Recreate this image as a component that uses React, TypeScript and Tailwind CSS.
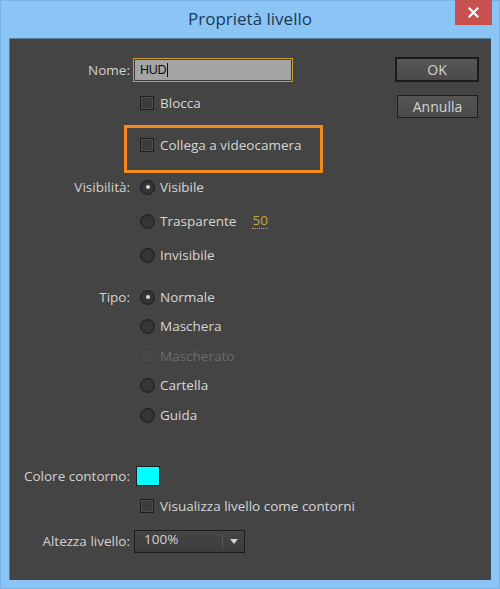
import React from 'react';

const font = "font-['Open_Sans','Noto_Sans',sans-serif]";

const Checkbox = () => (
  <span className="w-[14px] h-[14px] shrink-0 border border-[#1f1f1f] bg-[#3b3b3b] shadow-[inset_0_0_0_1px_#4d4d4d]" />
);

const Radio = ({ checked, disabled }: { checked?: boolean; disabled?: boolean }) => (
  <span
    className={`w-[15px] h-[15px] shrink-0 rounded-full flex items-center justify-center border ${
      disabled ? 'border-[#3c3c3c] bg-[#474747]' : 'border-[#202020] bg-[#363636] shadow-[inset_0_0_0_1px_#2c2c2c]'
    }`}
  >
    {checked && <span className="w-[4px] h-[4px] rounded-full bg-[#dadada]" />}
  </span>
);

const Row = ({ label, className, children }: { label?: string; className: string; children: React.ReactNode }) => (
  <div className={`flex items-center ${className}`}>
    <div className="w-[120px] shrink-0 text-right text-[#d2d2d2]">{label}</div>
    <div className="ml-[10px] flex items-center">{children}</div>
  </div>
);

const Option = ({ label, checked, disabled }: { label: string; checked?: boolean; disabled?: boolean }) => (
  <span className="flex items-center gap-[5px]">
    <Radio checked={checked} disabled={disabled} />
    <span className={disabled ? 'text-[#6b6b6b]' : 'text-[#d6d6d6]'}>{label}</span>
  </span>
);

export default function App() {
  return (
    <div className={`w-[500px] h-[589px] bg-[#8ac5f5] border border-[#7ab4e6] flex flex-col ${font}`}>
      {/* Title bar */}
      <div className="relative h-[37px] shrink-0 flex items-center justify-center">
        <span className="text-[17px] text-[#1d3a58] -mt-[2px]">Proprietà livello</span>
        <div className="absolute top-[-1px] right-[7px] w-[37px] h-[25px] bg-[#c8504f] flex items-center justify-center">
          <svg width="11" height="11" viewBox="0 0 11 11">
            <path d="M1.5 1.5 L9.5 9.5 M9.5 1.5 L1.5 9.5" stroke="#fff" strokeWidth="2.2" strokeLinecap="square" />
          </svg>
        </div>
      </div>

      {/* Panel */}
      <div className="mx-[8px] mb-[8px] flex-1 bg-[#444444] border-t border-l border-[#5b7d9c] flex text-[13.5px]">
        <div className="flex-1 pt-[19px]">
          <Row label="Nome:" className="h-[24px]">
            <div className="-ml-[7px] w-[160px] h-[24px] border border-[#c9a12a] bg-[#a4a4a4] shadow-[inset_0_0_0_1px_#3c3c3c] flex items-center pl-[6px] text-[#111]">
              <span className="font-['Liberation_Sans',sans-serif] text-[12.5px] tracking-[-0.3px]">HUD</span>
              <span className="w-px h-[14px] bg-[#111] ml-[1px]" />
            </div>
          </Row>

          <Row className="mt-[10px] h-[22px]">
            <span className="flex items-center gap-[6px]">
              <Checkbox />
              <span className="text-[#d6d6d6]">Blocca</span>
            </span>
          </Row>

          <Row className="mt-[11px] h-[47px]">
            <div className="-ml-[16px] w-[199px] h-[48px] border-[3px] border-[#f5891c] flex items-center pl-[13px] pb-[7px]">
              <span className="flex items-center gap-[6px]">
                <Checkbox />
                <span className="text-[#d6d6d6]">Collega a videocamera</span>
              </span>
            </div>
          </Row>

          <Row label="Visibilità:" className="mt-[4px] h-[22px]">
            <Option label="Visibile" checked />
          </Row>
          <Row className="mt-[12px] h-[22px]">
            <Option label="Trasparente" />
            <span className="ml-[16px] text-[#caa43c] border-b border-dotted border-[#caa43c] leading-[15px]">50</span>
          </Row>
          <Row className="mt-[12px] h-[22px]">
            <Option label="Invisibile" />
          </Row>

          <Row label="Tipo:" className="mt-[20px] h-[22px]">
            <Option label="Normale" checked />
          </Row>
          <Row className="mt-[7px] h-[22px]">
            <Option label="Maschera" />
          </Row>
          <Row className="mt-[8px] h-[22px]">
            <Option label="Mascherato" disabled />
          </Row>
          <Row className="mt-[7px] h-[22px]">
            <Option label="Cartella" />
          </Row>
          <Row className="mt-[8px] h-[22px]">
            <Option label="Guida" />
          </Row>

          <Row label="Colore contorno:" className="mt-[39px] h-[22px]">
            <span className="-ml-[4px] w-[24px] h-[20px] bg-[#00ffff] border border-[#1d1d1d]" />
          </Row>
          <Row className="mt-[8px] h-[22px]">
            <span className="flex items-center gap-[6px]">
              <Checkbox />
              <span className="text-[#d6d6d6]">Visualizza livello come contorni</span>
            </span>
          </Row>

          <Row label="Altezza livello:" className="mt-[13px] h-[22px]">
            <div className="-ml-[6px] w-[111px] h-[23px] border border-[#1b1b1b] bg-gradient-to-b from-[#454545] to-[#3c3c3c] flex items-center">
              <span className="flex-1 pl-[9px] -mt-[3px] text-[#d2d2d2]">100%</span>
              <span className="w-px h-[15px] bg-[#2a2a2a] border-r border-[#555]" />
              <span className="w-[21px] flex items-center justify-center">
                <svg width="8" height="5" viewBox="0 0 8 5">
                  <path d="M0 0 H8 L4 5 Z" fill="#d4d4d4" />
                </svg>
              </span>
            </div>
          </Row>
        </div>

        {/* Buttons */}
        <div className="w-[84px] mr-[12px] pt-[18px] flex flex-col items-end">
          <button className="w-[84px] h-[25px] border-2 border-[#1b1b1b] bg-gradient-to-b from-[#575757] to-[#4a4a4a] text-[#d2d2d2] text-[14px] leading-none">
            OK
          </button>
          <button className="mt-[13px] mr-px w-[81px] h-[23px] border border-[#1e1e1e] bg-gradient-to-b from-[#555] to-[#4a4a4a] text-[#d2d2d2] text-[14px] leading-none">
            Annulla
          </button>
        </div>
      </div>
    </div>
  );
}
